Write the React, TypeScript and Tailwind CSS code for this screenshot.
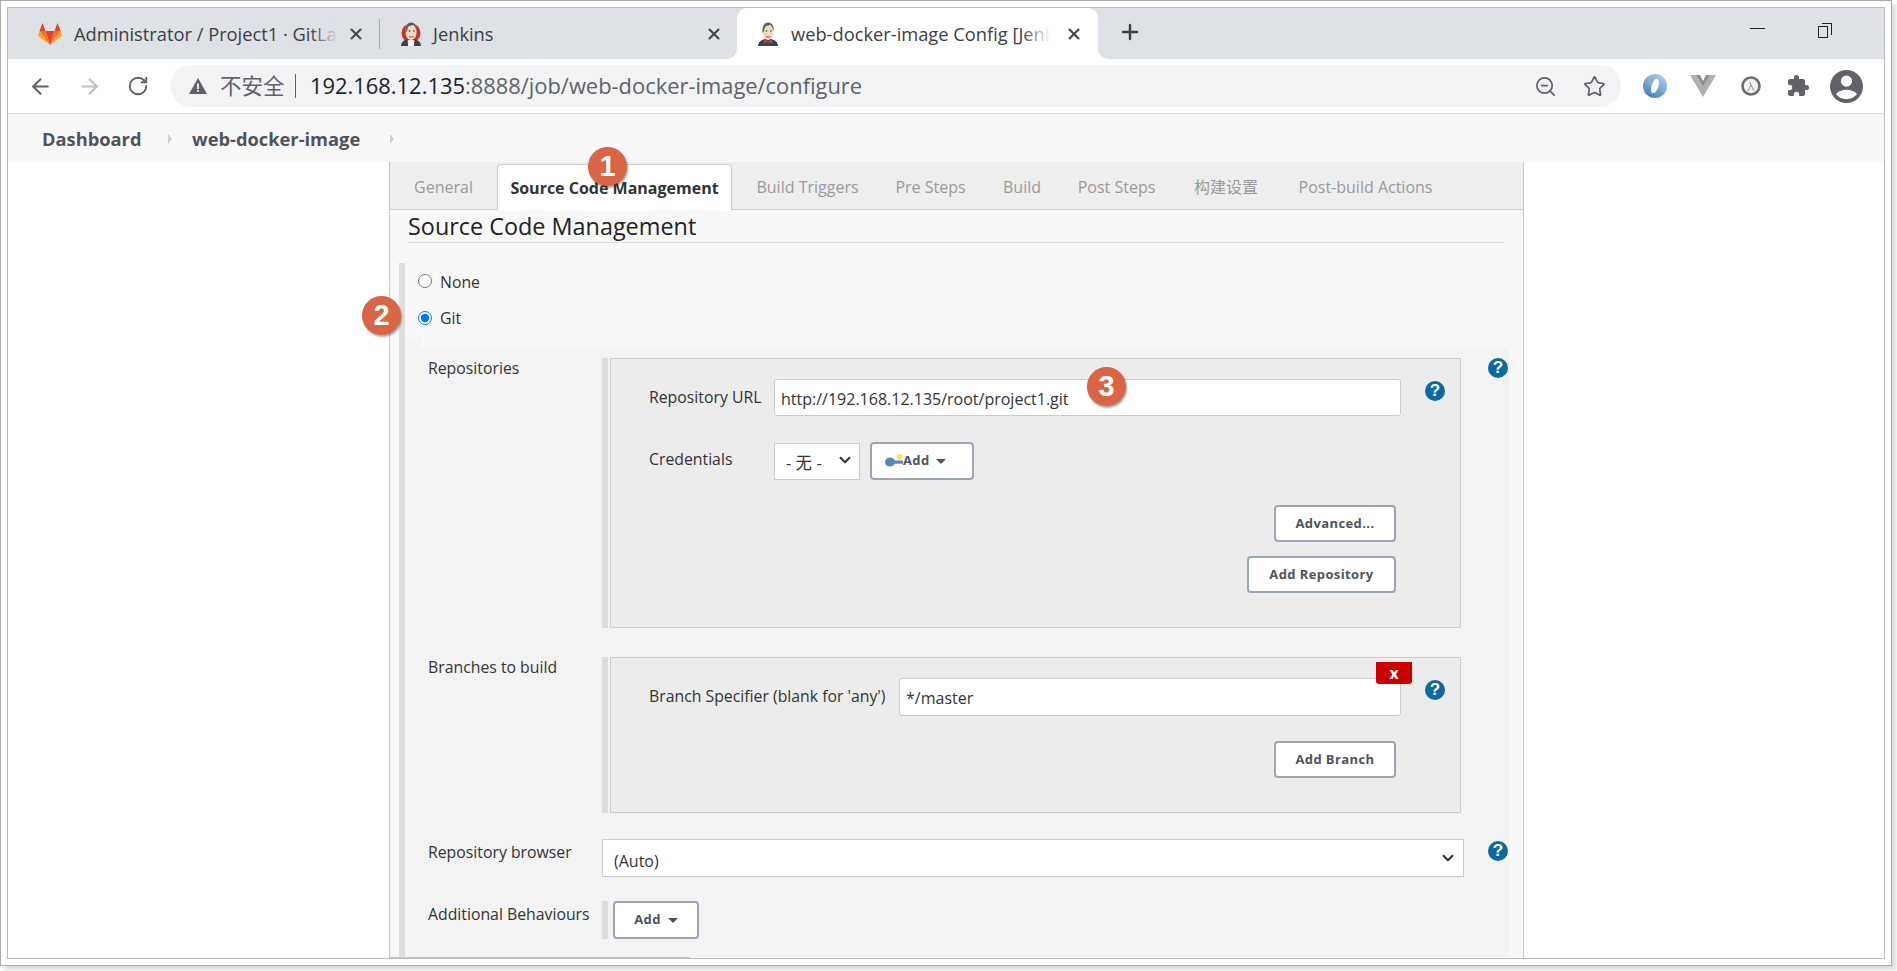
import React from "react";
import { ArrowLeft, ArrowRight, ChevronDown, Plus, RotateCw, Star, X, ZoomOut } from "lucide-react";

const tabs = [
  { label: "General", w: "w-[107px]", active: false },
  { label: "Source Code Management", w: "w-[235px]", active: true },
  { label: "Build Triggers", w: "w-[151px]", active: false },
  { label: "Pre Steps", w: "w-[95px]", active: false },
  { label: "Build", w: "w-[88px]", active: false },
  { label: "Post Steps", w: "w-[101px]", active: false },
  { label: "构建设置", w: "w-[118px]", active: false },
  { label: "Post-build Actions", w: "w-[161px]", active: false },
];

function GitlabIcon() {
  return (
    <svg width="24" height="22" viewBox="0 0 24 22">
      <polygon points="12,22 7.5,8 16.5,8" fill="#e24329" />
      <polygon points="12,22 7.5,8 1.5,8" fill="#fc6d26" />
      <polygon points="12,22 16.5,8 22.5,8" fill="#fc6d26" />
      <polygon points="1.5,8 0,13 12,22" fill="#fca326" />
      <polygon points="22.5,8 24,13 12,22" fill="#fca326" />
      <polygon points="1.5,8 7.5,8 4.5,0" fill="#e24329" />
      <polygon points="22.5,8 16.5,8 19.5,0" fill="#e24329" />
    </svg>
  );
}

function JenkinsIcon({ red }: { red?: boolean }) {
  return (
    <svg width="24" height="24" viewBox="0 0 24 24">
      {red && <circle cx="12" cy="11" r="9.5" fill="#c8322c" />}
      <path d="M2 24c0-4 3-6 7-7h6c4 1 7 3 7 7z" fill={red ? "#39424e" : "#2f4656"} />
      <path d="M8 17.500l4 1.500 4-1.500v4l-4-1.500-4 1.500z" fill="#d33833" />
      <path d="M6.500 8c0-5 2.500-7 5.500-7s5.500 2 5.500 7c0 3 0 5-1 7-1 2-3 3-4.500 3-2 0-3.500-1-4.500-3-1-2-1-4-1-7z" fill="#f0d9bf" />
      <path d="M6.500 11C6 5 8 .5 12 .5S18 4 17.700 8l-.7.3c0-2.300-1-4.300-2.500-5.300-2 .5-4.500.5-5.500 2-.5 2-.5 4-2.500 6z" fill="#5b5f62" />
      <path d="M10 14.500c1.500.8 3 .8 5 0" stroke="#8a5a48" strokeWidth="1" fill="none" />
      <circle cx="10.500" cy="9" r="0.8" fill="#333" />
      <circle cx="15" cy="9" r="0.8" fill="#333" />
      {red && <rect x="9" y="18" width="6" height="6" rx="1" fill="#fff" />}
    </svg>
  );
}

function HelpDot() {
  return (
    <span className="flex h-[20px] w-[20px] items-center justify-center rounded-full bg-[#0b6aa2] font-['Liberation_Sans',sans-serif] text-[17px] font-bold text-white">
      ?
    </span>
  );
}

function Btn({ children, className = "" }: { children: React.ReactNode; className?: string }) {
  return (
    <button
      className={
        "flex items-center justify-center rounded-[4px] border-2 border-[#9aa7b3] bg-white text-[13px] font-bold tracking-[0.4px] text-[#4d545d] " +
        className
      }
    >
      {children}
    </button>
  );
}

function Badge({ n, className }: { n: number; className: string }) {
  return (
    <div
      className={
        "absolute flex h-[39px] w-[39px] items-center justify-center rounded-full bg-[#d96544] font-['Liberation_Sans',sans-serif] text-[29px] font-bold text-white shadow-[1px_2px_2px_rgba(0,0,0,0.35)] " +
        className
      }
    >
      {n}
    </div>
  );
}

function Crumb() {
  return (
    <svg width="6" height="12" viewBox="0 0 6 12">
      <path d="M1 1l4 5-4 5z" fill="#cfcfcf" />
    </svg>
  );
}

export default function App() {
  return (
    <div className="relative h-[971px] w-[1897px] overflow-hidden bg-white font-['Open_Sans','Noto_Sans_CJK_SC',sans-serif] text-[#333]">
      <div className="h-[966px] w-[1892px] border border-[#aaa] bg-white p-[6px] shadow-[4px_4px_4px_#ddd]">
        <div className="flex h-full flex-col border border-[#bbb]">
          {/* tab strip */}
          <div className="flex h-[51px] shrink-0 bg-white text-[18.3px] text-[#3c4043]">
            <div className="flex w-[729px] items-center rounded-br-[10px] bg-[#dee1e6]">
              <div className="flex h-[30px] w-[372px] items-center border-r border-[#a9acb0] pl-[30px]">
                <GitlabIcon />
                <span className="relative ml-[12px] w-[264px] overflow-hidden whitespace-nowrap">
                  Administrator / Project1 · GitLab
                  <span className="absolute inset-y-0 right-0 w-[28px] bg-gradient-to-r from-transparent to-[#dee1e6]" />
                </span>
                <X size={18} strokeWidth={2.8} className="ml-[9px] text-[#45484c]" />
              </div>
              <div className="flex flex-1 items-center pl-[19px]">
                <JenkinsIcon red />
                <span className="ml-[10px] w-[272px]">Jenkins</span>
                <X size={18} strokeWidth={2.8} className="text-[#45484c]" />
              </div>
            </div>
            <div className="w-[361px] bg-[#dee1e6]">
              <div className="flex h-full items-center rounded-t-[10px] bg-white pl-[19px]">
                <JenkinsIcon />
                <span className="relative ml-[11px] w-[259px] overflow-hidden whitespace-nowrap">
                  web-docker-image Config [Jenkins]
                  <span className="absolute inset-y-0 right-0 w-[28px] bg-gradient-to-r from-transparent to-white" />
                </span>
                <X size={18} strokeWidth={2.8} className="ml-[15px] text-[#45484c]" />
              </div>
            </div>
            <div className="flex flex-1 items-start rounded-bl-[10px] bg-[#dee1e6] pt-[12px]">
              <Plus size={24} strokeWidth={2.4} className="ml-[20px] text-[#3c4043]" />
              <div className="ml-[608px] mt-[8px] h-px w-[15px] bg-[#222]" />
              <div className="relative ml-[53px] mt-[3px] h-[15px] w-[14px]">
                <div className="absolute left-0 top-[3px] h-[12px] w-[10px] border border-[#222] bg-[#dee1e6]" />
                <div className="absolute right-0 top-0 h-[12px] w-[10px] border-r border-t border-[#222]" />
              </div>
            </div>
          </div>

          {/* toolbar */}
          <div className="flex h-[55px] shrink-0 items-center border-b border-[#ddd] bg-white pl-[8px] text-[#5f6368]">
            <div className="flex w-[49px] justify-center">
              <ArrowLeft size={25} strokeWidth={1.9} />
            </div>
            <div className="flex w-[49px] justify-center text-[#bcbfc3]">
              <ArrowRight size={25} strokeWidth={1.9} />
            </div>
            <div className="flex w-[48px] justify-center">
              <RotateCw size={22} strokeWidth={2.1} />
            </div>
            <div className="ml-[8px] flex h-[42px] w-[1451px] items-center rounded-full bg-[#f1f3f4] pl-[19px] pr-[15px]">
              <svg width="18" height="16" viewBox="0 0 18 16">
                <path d="M9 0l9 16H0z" fill="#5f6368" />
                <rect x="8.100" y="5.500" width="1.800" height="5.500" fill="#f1f3f4" />
                <rect x="8.100" y="12" width="1.800" height="1.800" fill="#f1f3f4" />
              </svg>
              <span className="ml-[13px] w-[75px] whitespace-nowrap text-[21.5px] text-[#5f6368]">不安全</span>
              <span className="h-[24px] w-px bg-[#5f6368]" />
              <span className="ml-[14px] flex-1 text-[21.9px] text-[#5f6368]">
                <span className="text-[#202124]">192.168.12.135</span>:8888/job/web-docker-image/configure
              </span>
              <ZoomOut size={23} strokeWidth={1.8} className="mr-[26px]" />
              <Star size={23} strokeWidth={1.8} />
            </div>
            <div className="ml-[10px] flex items-center">
              <div className="flex w-[47px] justify-center">
                <svg width="26" height="26" viewBox="0 0 26 26">
                  <defs>
                    <linearGradient id="ringFill" x1="0.8" y1="0" x2="0.2" y2="1">
                      <stop offset="0" stopColor="#a9cdec" />
                      <stop offset="0.5" stopColor="#7fa9d6" />
                      <stop offset="1" stopColor="#3d78b8" />
                    </linearGradient>
                  </defs>
                  <circle cx="13" cy="13" r="12" fill="url(#ringFill)" />
                  <ellipse cx="13" cy="13" rx="3.400" ry="7.500" transform="rotate(18 13 13)" fill="#fff" />
                </svg>
              </div>
              <div className="flex w-[49px] justify-center">
                <svg width="26" height="24" viewBox="0 0 26 24">
                  <path d="M0 1h6l7 12 7-12h6L13 23z" fill="#b0b0b0" />
                  <path d="M6 1h4l3 6 3-6h4l-7 12z" fill="#8e8e8e" />
                </svg>
              </div>
              <div className="flex w-[47px] justify-center">
                <svg width="22" height="22" viewBox="0 0 22 22">
                  <circle cx="11" cy="11" r="8.500" fill="#f4f4f4" stroke="#6a6f6f" strokeWidth="2.600" />
                  <path d="M8 16l3-6 3 6M11 10l-1-3" fill="none" stroke="#8a8a8a" strokeWidth="1" />
                </svg>
              </div>
              <div className="flex w-[48px] justify-center">
                <svg width="24" height="24" viewBox="0 0 24 24">
                  <path
                    d="M20.500 11H19V7c0-1.100-.9-2-2-2h-4V3.500a2.500 2.500 0 0 0-5 0V5H4c-1.100 0-2 .9-2 2v3.800h1.500a2.700 2.700 0 0 1 0 5.400H2V20c0 1.100.9 2 2 2h3.800v-1.500a2.700 2.700 0 0 1 5.400 0V22H17c1.100 0 2-.9 2-2v-4h1.500a2.500 2.500 0 0 0 0-5z"
                    fill="#5f6368"
                  />
                </svg>
              </div>
              <div className="flex w-[48px] justify-center">
                <svg width="33" height="33" viewBox="0 0 24 24">
                  <path
                    d="M12 0a12 12 0 1 0 0 24 12 12 0 0 0 0-24zm0 4a4 4 0 1 1 0 8.200A4 4 0 0 1 12 4zm0 17.200c-3 0-5.700-1.300-7.600-3.600 1.200-2 4.800-3.200 7.600-3.200s6.400 1.200 7.600 3.200c-1.900 2.300-4.600 3.600-7.600 3.600z"
                    fill="#5f6368"
                  />
                </svg>
              </div>
            </div>
          </div>

          {/* breadcrumb */}
          <div className="flex h-[48px] shrink-0 items-center bg-[#f8f8f8] pl-[34px] pt-[2px] text-[18.3px] font-bold text-[#4d545d]">
            <span className="w-[125px]">Dashboard</span>
            <Crumb />
            <span className="ml-[19px] w-[197px]">web-docker-image</span>
            <Crumb />
          </div>

          {/* page */}
          <div className="flex min-h-0 flex-1 text-[15.8px]">
            <div className="w-[381px] shrink-0 bg-white" />
            <div className="flex w-[1135px] shrink-0 flex-col border-x border-[#c8c8c8] bg-[#f8f8f8]">
              <div className="flex h-[48px] shrink-0 items-end border-b border-[#ccc] bg-[#eeeeee] text-[16px]">
                {tabs.map((t) =>
                  t.active ? (
                    <div
                      key={t.label}
                      className={"-mb-px flex h-[46px] items-center justify-center rounded-t-[4px] border border-b-0 border-[#ccc] bg-white font-bold text-[#333] " + t.w}
                    >
                      {t.label}
                    </div>
                  ) : (
                    <div key={t.label} className={"flex h-[46px] items-center justify-center pt-[1px] text-[#9a9a9a] " + t.w}>
                      {t.label}
                    </div>
                  )
                )}
              </div>
              <h2 className="ml-[18px] mr-[19px] h-[33px] shrink-0 border-b border-[#ddd] text-[23.4px] font-normal leading-[32px] text-[#222]">
                Source Code Management
              </h2>
              <div className="ml-[9px] mt-[20px] flex min-h-0 flex-1 flex-col border-l-[6px] border-[#dddddd]">
                <div className="h-[74px] shrink-0 pl-[13px]">
                  <label className="flex h-[36px] items-center">
                    <input type="radio" name="scm" className="h-[14px] w-[14px]" />
                    <span className="ml-[8px] pt-[3px]">None</span>
                  </label>
                  <label className="flex h-[38px] items-center">
                    <input type="radio" name="scm" defaultChecked className="h-[14px] w-[14px]" />
                    <span className="ml-[8px] pt-[2px]">Git</span>
                  </label>
                </div>
                <div className="h-[12px] w-[16px] shrink-0 bg-[#f3f3f3]" />
                <div className="flex w-[1104px] flex-1 flex-col bg-[#f3f3f3]">
                  {/* repositories */}
                  <div className="flex pt-[9px]">
                    <div className="w-[197px] shrink-0 pl-[23px] leading-[20px]">Repositories</div>
                    <div className="flex w-[859px] shrink-0">
                      <div className="w-[6px] bg-[#dddddd]" />
                      <div className="ml-[2px] flex h-[270px] w-[851px] flex-col border border-[#ccc] bg-[#ececec] pl-[38px] pt-[20px]">
                        <div className="flex h-[37px] items-center">
                          <span className="w-[125px]">Repository URL</span>
                          <input
                            defaultValue="http://192.168.12.135/root/project1.git"
                            className="h-[37px] w-[627px] rounded-[3px] border border-[#ccc] bg-white px-[6px] pt-[2px] text-[16px] outline-none"
                          />
                          <span className="ml-[24px] self-start pt-[2px]">
                            <HelpDot />
                          </span>
                        </div>
                        <div className="mt-[26px] flex h-[38px] items-center">
                          <span className="w-[125px] pb-[2px]">Credentials</span>
                          <div className="relative h-[37px] w-[86px] border border-[#ccc] bg-white">
                            <select className="h-full w-full appearance-none bg-transparent pl-[11px] pt-[5px] text-[16.5px] outline-none">
                              <option>- 无 -</option>
                            </select>
                            <ChevronDown size={18} strokeWidth={2.6} className="absolute right-[5px] top-[7px] text-[#333]" />
                          </div>
                          <Btn className="ml-[10px] h-[38px] w-[104px] justify-start pl-[13px]">
                            <svg width="18" height="14" viewBox="0 0 18 14">
                              <circle cx="14.500" cy="3" r="3" fill="#f5e663" />
                              <ellipse cx="5" cy="8" rx="5" ry="4.500" fill="#5a86b8" />
                              <rect x="6" y="6.500" width="12" height="3.200" fill="#5a86b8" />
                            </svg>
                            <span>Add</span>
                            <span className="ml-[6px] h-0 w-0 border-x-[5px] border-t-[5px] border-x-transparent border-t-[#4d545d]" />
                          </Btn>
                        </div>
                        <div className="mt-[25px] flex justify-end pr-[64px]">
                          <Btn className="h-[37px] w-[122px]">Advanced...</Btn>
                        </div>
                        <div className="mt-[14px] flex justify-end pr-[64px]">
                          <Btn className="h-[37px] w-[149px]">Add Repository</Btn>
                        </div>
                      </div>
                    </div>
                    <span className="ml-[27px]">
                      <HelpDot />
                    </span>
                  </div>

                  {/* branches */}
                  <div className="mt-[29px] flex">
                    <div className="w-[197px] shrink-0 pl-[23px] leading-[20px]">Branches to build</div>
                    <div className="flex">
                      <div className="w-[6px] bg-[#dddddd]" />
                      <div className="relative ml-[2px] h-[156px] w-[851px] border border-[#ccc] bg-[#ececec] pl-[38px] pt-[20px]">
                        <div className="flex h-[38px] items-center">
                          <span className="w-[250px] whitespace-nowrap">Branch Specifier (blank for 'any')</span>
                          <input
                            defaultValue="*/master"
                            className="h-[38px] w-[502px] rounded-[3px] border border-[#ccc] bg-white px-[6px] pt-[2px] text-[16px] outline-none"
                          />
                          <span className="ml-[24px] self-start pt-[2px]">
                            <HelpDot />
                          </span>
                        </div>
                        <div className="mt-[25px] flex justify-end pr-[64px]">
                          <Btn className="h-[37px] w-[122px]">Add Branch</Btn>
                        </div>
                        <div className="absolute left-[765px] top-[4px] flex h-[22px] w-[36px] items-center justify-center rounded-b-[3px] bg-[#cc0000] pb-[1px] text-[16px] font-bold text-white">
                          x
                        </div>
                      </div>
                    </div>
                  </div>

                  {/* browser */}
                  <div className="mt-[26px] flex">
                    <div className="w-[197px] shrink-0 pl-[23px] pt-[3px] leading-[20px]">Repository browser</div>
                    <div className="relative h-[38px] w-[862px] border border-[#ccc] bg-white">
                      <select className="h-full w-full appearance-none bg-transparent pl-[11px] pt-[6px] text-[16px] outline-none">
                        <option>(Auto)</option>
                      </select>
                      <ChevronDown size={18} strokeWidth={2.6} className="absolute right-[6px] top-[9px] text-[#333]" />
                    </div>
                    <span className="ml-[24px] mt-[2px]">
                      <HelpDot />
                    </span>
                  </div>

                  {/* behaviours */}
                  <div className="mt-[24px] flex">
                    <div className="w-[197px] shrink-0 whitespace-nowrap pl-[23px] pt-[3px] leading-[20px]">Additional Behaviours</div>
                    <div className="w-[6px] bg-[#dddddd]" />
                    <Btn className="ml-[5px] h-[38px] w-[86px]">
                      <span>Add</span>
                      <span className="ml-[7px] h-0 w-0 border-x-[5px] border-t-[5px] border-x-transparent border-t-[#4d545d]" />
                    </Btn>
                  </div>
                </div>
              </div>
              <div className="h-px w-[300px] shrink-0 bg-[#bcccc4]" />
            </div>
            <div className="flex-1 bg-white" />
          </div>
        </div>
      </div>
      <Badge n={1} className="left-[588px] top-[147px]" />
      <Badge n={2} className="left-[362px] top-[296px]" />
      <Badge n={3} className="left-[1087px] top-[367px]" />
    </div>
  );
}
